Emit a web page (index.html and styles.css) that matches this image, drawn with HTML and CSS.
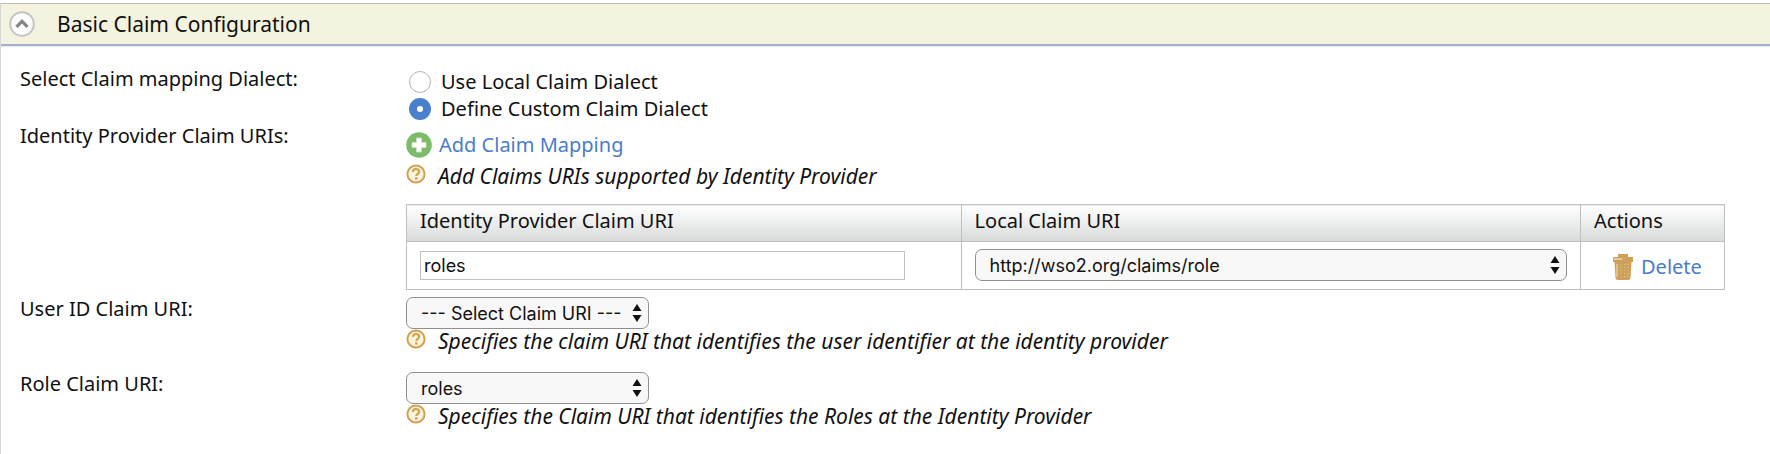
FILE: index.html
```html
<!DOCTYPE html>
<html lang="en">
<head>
<meta charset="utf-8">
<title>Basic Claim Configuration</title>
<link rel="stylesheet" href="styles.css">
</head>
<body>
<svg class="defs" aria-hidden="true">
  <symbol id="help" viewBox="0 0 20 20">
    <circle cx="10" cy="10" r="8.600" fill="#fbf3dc" stroke="#d3a04f" stroke-width="2"/>
    <path d="M6.900 7.900C7 5.900 8.300 5 10 5s3.200 1 3.200 2.700c0 2.100-2.900 2.200-2.900 4.300" fill="none" stroke="#d3a04f" stroke-width="2.200"/>
    <rect x="9.100" y="13.200" width="2.400" height="2.300" fill="#d3a04f"/>
  </symbol>
  <symbol id="arrows" viewBox="0 0 10 18">
    <path d="M5 0l4.500 7h-9zM5 18l4.500-7h-9z" fill="#111"/>
  </symbol>
</svg>
<main class="panel">
  <header class="panel-header">
    <button class="toggle" type="button" aria-label="Collapse section">
      <svg viewBox="0 0 26 26">
        <circle cx="13" cy="13" r="11.800" fill="#fdfdfd" stroke="#c4c4c6" stroke-width="2"/>
        <path d="M7.500 15.800L13 10.300l5.500 5.500" fill="none" stroke="#858585" stroke-width="3.200"/>
      </svg>
    </button>
    <h1 class="panel-title">Basic Claim Configuration</h1>
  </header>
  <form class="form">
    <div class="row" role="radiogroup" aria-labelledby="dialect">
      <span class="label" id="dialect">Select Claim mapping Dialect:</span>
      <div class="field radios">
        <label class="choice"><input class="radio" type="radio" name="dialect">Use Local Claim Dialect</label>
        <label class="choice"><input class="radio" type="radio" name="dialect" checked>Define Custom Claim Dialect</label>
      </div>
    </div>
    <div class="row">
      <span class="label">Identity Provider Claim URIs:</span>
      <div class="field mappings">
        <a class="action add" href="#">
          <svg class="add-icon" viewBox="0 0 26 26">
            <circle cx="13" cy="13" r="12.800" fill="#7cbb68"/>
            <path d="M10.500 6h5v4.500H20v5h-4.500V20h-5v-4.500H6v-5h4.500z" fill="#fff" stroke="#d5dfd0" stroke-width=".8"/>
          </svg>Add Claim Mapping</a>
        <p class="hint"><svg class="help-icon"><use href="#help"/></svg>Add Claims URIs supported by Identity Provider</p>
        <table class="claims">
          <thead>
            <tr><th>Identity Provider Claim URI</th><th class="col-local">Local Claim URI</th><th class="col-actions">Actions</th></tr>
          </thead>
          <tbody>
            <tr>
              <td><input class="text-input" type="text" value="roles" aria-label="Identity Provider Claim URI"></td>
              <td>
                <div class="picker">
                  <select class="select" aria-label="Local Claim URI"><option>http://wso2.org/claims/role</option></select>
                  <svg class="arrows"><use href="#arrows"/></svg>
                </div>
              </td>
              <td>
                <a class="action delete" href="#">
                  <svg class="trash-icon" viewBox="0 0 22 26">
                    <path d="M6 0h10v3h5v5h-1.500L18.500 24q-.3 2-2.500 2H6q-2.200 0-2.500-2L2.500 8H1V3h5z" fill="#cfa058"/>
                    <path d="M1.500 5h9M5 10v13" fill="none" stroke="#e9d3ad" stroke-width="1.300"/>
                    <path d="M9 10v13M12.500 10v13M16 10v13" fill="none" stroke="#e9d3ad" stroke-width=".8" stroke-dasharray="1 2"/>
                  </svg>Delete</a>
              </td>
            </tr>
          </tbody>
        </table>
      </div>
    </div>
    <div class="row claim-row">
      <label class="label" for="user-claim">User ID Claim URI:</label>
      <div class="field">
        <div class="picker short">
          <select class="select" id="user-claim"><option>--- Select Claim URI ---</option></select>
          <svg class="arrows"><use href="#arrows"/></svg>
        </div>
        <p class="hint"><svg class="help-icon"><use href="#help"/></svg>Specifies the claim URI that identifies the user identifier at the identity provider</p>
      </div>
    </div>
    <div class="row claim-row">
      <label class="label" for="role-claim">Role Claim URI:</label>
      <div class="field">
        <div class="picker short">
          <select class="select" id="role-claim"><option>roles</option></select>
          <svg class="arrows"><use href="#arrows"/></svg>
        </div>
        <p class="hint"><svg class="help-icon"><use href="#help"/></svg>Specifies the Claim URI that identifies the Roles at the Identity Provider</p>
      </div>
    </div>
  </form>
</main>
</body>
</html>
```
FILE: styles.css
```css
* { box-sizing: border-box; }
body {
  margin: 0;
  background: #fff;
  color: #111;
  font: 20px/24px "Noto Sans", "Open Sans", sans-serif;
}
.defs { position: absolute; width: 0; height: 0; }
.panel {
  margin-top: 3px;
  min-height: calc(100vh - 3px);
  border-left: 1px solid #d6d6d6;
}
.panel-header {
  display: flex;
  align-items: center;
  gap: 22px;
  height: 43px;
  padding-left: 8px;
  background: #f4f3df;
  border-top: 1px solid #bcbcbc;
  border-bottom: 2px solid #9fb3cf;
  box-shadow: 0 1px 0 #ececec;
}
.toggle { width: 26px; height: 26px; padding: 0; border: 0; background: none; }
.toggle svg { display: block; }
.panel-title { margin: 0; font-size: 21px; font-weight: 400; }
.form { display: flex; flex-direction: column; gap: 3px; padding: 21px 45px 8px 19px; }
.row { display: grid; grid-template-columns: 386px minmax(0, 1fr); }
.claim-row { padding: 4px 0 12px; }
.radios { display: flex; flex-direction: column; gap: 3px; padding-top: 3px; }
.mappings { padding-top: 8px; }
.choice { display: flex; align-items: center; gap: 10px; }
.radio {
  appearance: none;
  width: 22px;
  height: 22px;
  margin: 0 0 0 3px;
  border: 1px solid #b4b4b4;
  border-radius: 50%;
  background: #fff;
}
.radio:checked { border: 8px solid #4a80cb; }
.action {
  display: flex;
  align-items: center;
  gap: 7px;
  width: max-content;
  color: #4a7dc9;
  text-decoration: none;
}
.add { margin-bottom: 6px; }
.add-icon { width: 26px; height: 26px; }
.hint { display: flex; gap: 12px; margin: 0; font-size: 21px; font-style: italic; }
.help-icon { flex: none; width: 20px; height: 20px; }
.claims { width: 100%; margin-top: 16px; border-collapse: collapse; table-layout: fixed; }
.claims th, .claims td { padding: 0 13px; border: 1px solid #bfbfbf; text-align: left; }
.claims th {
  height: 37px;
  padding-bottom: 5px;
  font-weight: 400;
  background: linear-gradient(#fff, #d8dada);
}
.claims td { height: 48px; padding-bottom: 1px; }
.col-local { width: 47%; }
.col-actions { width: 144px; }
.text-input {
  display: block;
  width: 92%;
  height: 29px;
  padding: 0 3px;
  border: 1px solid #c0c0c0;
  color: #111;
  font: 18px Inter, "Liberation Sans", sans-serif;
}
.picker { position: relative; }
.short { width: 243px; }
.select {
  appearance: none;
  display: block;
  width: 100%;
  height: 32px;
  padding: 0 20px 0 14px;
  border: 1px solid #8f8f8f;
  border-radius: 7px;
  background: #f8f8f8;
  color: #111;
  font: 18px Inter, "Liberation Sans", sans-serif;
}
.arrows { position: absolute; top: 7px; right: 7px; width: 10px; height: 18px; pointer-events: none; }
.delete { margin: 4px 0 0 18px; }
.trash-icon { width: 22px; height: 26px; }
```
